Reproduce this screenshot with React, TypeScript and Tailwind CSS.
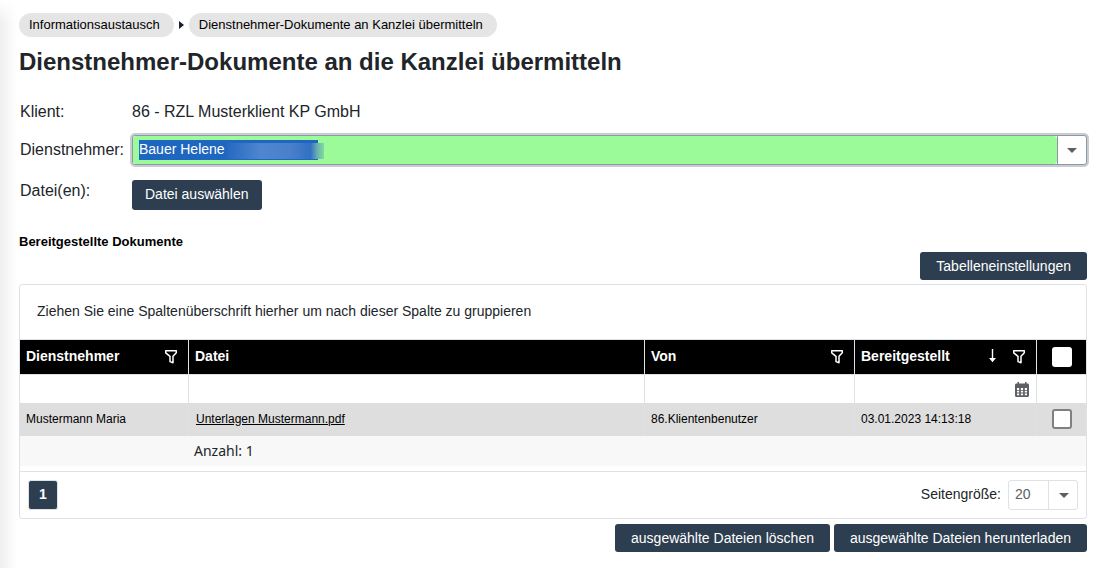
import { useState, type ReactNode } from "react";

function Caret() {
  return (
    <svg width="10" height="5" viewBox="0 0 10 5" aria-hidden="true" className="pointer-events-none shrink-0">
      <path d="M0 0h10L5 5z" fill="#5c5f63" />
    </svg>
  );
}

function FilterButton({ column }: { column: string }) {
  return (
    <button type="button" aria-label={`${column} filtern`} className="flex">
      <svg width="14" height="15" viewBox="0 0 14 15" fill="none" stroke="#fff" strokeWidth="1.5" aria-hidden="true">
        <path d="M1.7 1.8h10.6v2L9 7.3v6.4L6 12.6V7.3L1.7 3.8z" strokeLinejoin="round" />
      </svg>
    </button>
  );
}

function SortIcon() {
  return (
    <svg width="7" height="14" viewBox="0 0 7 14" aria-hidden="true">
      <path d="M2.8 0h1.4v9H7L3.5 13.2 0 9h2.8z" fill="#fff" />
    </svg>
  );
}

function CalendarIcon() {
  return (
    <svg width="14" height="15" viewBox="0 0 14 15" aria-hidden="true">
      <path
        fillRule="evenodd"
        fill="#5c5f63"
        d="M2.500 0H4v1.500h6V0h1.500v1.500h1c.8 0 1.500.7 1.500 1.500v10.500c0 .8-.7 1.500-1.500 1.500h-11C.7 15 0 14.300 0 13.500V3c0-.8.7-1.500 1.500-1.500h1zM2 6v2h2.200V6zm3.900 0v2h2.200V6zm3.900 0v2H12V6zM2 8.800v1.700h2.200V8.800zm3.900 0v1.700h2.200V8.800zm3.900 0v1.700H12V8.800zM2 11.500v1.700h2.200v-1.700zm3.900 0v1.700h2.200v-1.700zm3.900 0v1.700H12v-1.700z"
      />
    </svg>
  );
}

function ActionButton({ children }: { children: ReactNode }) {
  return (
    <button type="button" className="h-7 rounded-[3px] bg-[#2d3e50] px-4 text-sm text-white">
      {children}
    </button>
  );
}

function HeaderCell({ label, children }: { label: string; children?: ReactNode }) {
  return (
    <th scope="col" className="border-t border-r border-[#dee2e6] pr-2.5 pb-0.5 pl-1.5 text-left">
      <div className="flex items-center justify-between">
        <span>{label}</span>
        <span className="flex items-center gap-4">{children}</span>
      </div>
    </th>
  );
}

export default function App() {
  const [employee, setEmployee] = useState("Bauer Helene");
  const [checked, setChecked] = useState(false);
  const cell = "border-r border-[#dee2e6] pb-0.5";
  const filterCell = "border-t border-r border-[#dee2e6]";
  const box = "block size-5 appearance-none rounded-[3px] bg-white checked:bg-[#2d3e50]";
  const crumb = "flex h-6 items-center rounded-full bg-[#e5e5e5] pr-3.5 pl-2.5";

  return (
    <div className="flex min-h-screen bg-white font-['Liberation_Sans',Arial,sans-serif] text-[#212529]">
      <div className="w-[19px] shrink-0 bg-linear-to-r from-[#efefef] to-white to-90% mask-[linear-gradient(transparent,black_24px)]" />
      <main className="min-w-0 flex-1 pt-[13px] pr-5 pb-4">
        <nav aria-label="Brotkrumen" className="flex items-center text-[13px] text-black">
          <a href="#austausch" className={crumb}>
            Informationsaustausch
          </a>
          <svg width="5" height="8" viewBox="0 0 5 8" aria-hidden="true" className="mx-[5px]">
            <path d="M0 0l5 4-5 4z" fill="#14202b" />
          </svg>
          <a href="#uebermitteln" className={crumb}>
            Dienstnehmer-Dokumente an Kanzlei übermitteln
          </a>
        </nav>

        <h1 className="mt-[11px] text-2xl leading-7 font-bold">Dienstnehmer-Dokumente an die Kanzlei übermitteln</h1>

        <form
          className="mt-6 grid grid-cols-[112px_1fr] items-center pl-px text-base leading-6"
          onSubmit={(e) => e.preventDefault()}
        >
          <span>Klient:</span>
          <span>86 - RZL Musterklient KP GmbH</span>

          <label htmlFor="employee" className="mt-[11px]">
            Dienstnehmer:
          </label>
          <div className="relative mt-[11px] flex h-[30px] rounded-[3px] border border-[#8e97a3] bg-white ring-2 ring-[#c8cdd3]">
            <input
              id="employee"
              value={employee}
              onChange={(e) => setEmployee(e.target.value)}
              className="min-w-0 flex-1 rounded-[3px] bg-[#9bfb98] bg-[linear-gradient(#1e66c0,#1e66c0)] bg-size-[179px_20px] bg-position-[6px_4px] bg-no-repeat px-1.5 pb-0.5 text-sm text-white outline-none"
            />
            <div
              aria-hidden="true"
              className="pointer-events-none absolute top-[7px] left-[94px] h-4 w-[97px] bg-[linear-gradient(to_right,#2768c0,#4f86d0_35%,#4a80cb_65%,#3270c2_86%,#6aafaf_93%,#80dc9e)]"
            />
            <button
              type="button"
              aria-label="Dienstnehmer auswählen"
              className="flex w-[29px] items-center justify-center border-l border-[#8e97a3]"
            >
              <Caret />
            </button>
          </div>

          <span className="mt-1.5">Datei(en):</span>
          <button
            type="button"
            className="mt-[15px] h-[30px] justify-self-start rounded-[3px] bg-[#2d3e50] px-[13px] pb-0.5 text-sm text-white"
          >
            Datei auswählen
          </button>
        </form>

        <h2 className="mt-6 text-[13px] leading-4 font-bold text-black">Bereitgestellte Dokumente</h2>
        <div className="mt-0.5 flex justify-end">
          <ActionButton>Tabelleneinstellungen</ActionButton>
        </div>

        <section className="mt-1 rounded-[3px] border border-[#dee2e6]">
          <p className="px-[17px] pt-4 pb-[18px] text-sm leading-5">
            Ziehen Sie eine Spaltenüberschrift hierher um nach dieser Spalte zu gruppieren
          </p>
          <table className="w-full table-fixed border-separate border-spacing-0 text-xs text-black">
            <colgroup>
              <col className="w-[169px]" />
              <col />
              <col className="w-[210px]" />
              <col className="w-[182px]" />
              <col className="w-[49px]" />
            </colgroup>
            <thead>
              <tr className="h-[35px] bg-black text-sm text-white">
                <HeaderCell label="Dienstnehmer">
                  <FilterButton column="Dienstnehmer" />
                </HeaderCell>
                <HeaderCell label="Datei" />
                <HeaderCell label="Von">
                  <FilterButton column="Von" />
                </HeaderCell>
                <HeaderCell label="Bereitgestellt">
                  <SortIcon />
                  <FilterButton column="Bereitgestellt" />
                </HeaderCell>
                <th scope="col" className="border-t border-[#dee2e6] pl-[15px]">
                  <input type="checkbox" aria-label="Alle auswählen" className={box} />
                </th>
              </tr>
            </thead>
            <tbody>
              <tr className="h-[29px]">
                <td className={filterCell} />
                <td className={filterCell} />
                <td className={filterCell} />
                <td className={filterCell}>
                  <button type="button" aria-label="Datum wählen" className="ml-auto flex pr-[7px]">
                    <CalendarIcon />
                  </button>
                </td>
                <td className="border-t border-[#dee2e6]" />
              </tr>
              <tr className="h-[33px] bg-[#dedede]">
                <td className={`${cell} pl-1.5`}>Mustermann Maria</td>
                <td className={`${cell} pl-[7px]`}>
                  <a href="#unterlagen" className="underline">
                    Unterlagen Mustermann.pdf
                  </a>
                </td>
                <td className={`${cell} pl-1.5`}>86.Klientenbenutzer</td>
                <td className={`${cell} pl-1.5`}>03.01.2023 14:13:18</td>
                <td className="pb-0.5 pl-[15px]">
                  <input
                    type="checkbox"
                    aria-label="Mustermann Maria auswählen"
                    checked={checked}
                    onChange={(e) => setChecked(e.target.checked)}
                    className={`${box} border-2 border-[#808080]`}
                  />
                </td>
              </tr>
            </tbody>
            <tfoot>
              <tr className="h-[30px] bg-[#f8f8f8] text-[#212529]">
                <td />
                <td colSpan={4} className="pl-[5px] font-['Noto_Sans',sans-serif] text-sm leading-5">
                  Anzahl: 1
                </td>
              </tr>
            </tfoot>
          </table>
          <div className="mt-[5px] flex items-center justify-between border-t border-[#dee2e6] p-2">
            <button
              type="button"
              aria-current="page"
              className="size-[30px] rounded-[3px] border border-[#dee2e6] bg-[#2d3e50] pb-0.5 text-sm font-bold text-white"
            >
              1
            </button>
            <div className="flex items-center gap-[7px] text-sm">
              <label htmlFor="page-size" className="pb-0.5">
                Seitengröße:
              </label>
              <div className="relative flex">
                <select
                  id="page-size"
                  defaultValue="20"
                  className="h-[30px] w-[70px] appearance-none rounded-[3px] border border-[#dee2e6] bg-white pb-0.5 pl-1.5 text-[#5c5f63]"
                >
                  <option>10</option>
                  <option>20</option>
                  <option>50</option>
                </select>
                <span className="pointer-events-none absolute inset-y-0 right-0 flex w-[30px] items-center justify-center border-l border-[#dee2e6]">
                  <Caret />
                </span>
              </div>
            </div>
          </div>
        </section>

        <div className="mt-[5px] flex justify-end gap-1">
          <ActionButton>ausgewählte Dateien löschen</ActionButton>
          <ActionButton>ausgewählte Dateien herunterladen</ActionButton>
        </div>
      </main>
    </div>
  );
}
